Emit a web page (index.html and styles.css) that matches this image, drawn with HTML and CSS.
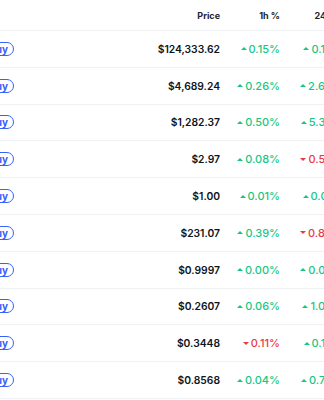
FILE: index.html
```html
<!DOCTYPE html>
<html>
<head>
<meta charset="utf-8">
<link rel="stylesheet" href="styles.css">
</head>
<body>
<div class="table">
  <div class="row head">
    <div class="c buy-c"></div>
    <div class="c num">Price</div>
    <div class="c num">1h %</div>
    <div class="c num">24h %</div>
    <div class="c num">7d %</div>
  </div>
  <div class="row"><div class="c buy-c"><span class="buy">Buy</span></div><div class="c num price">$124,333.62</div><div class="c num"><span class="pct up"><i></i>0.15%</span></div><div class="c num"><span class="pct up"><i></i>0.13%</span></div><div class="c num"><span class="pct up"><i></i>3.21%</span></div></div>
  <div class="row"><div class="c buy-c"><span class="buy">Buy</span></div><div class="c num price">$4,689.24</div><div class="c num"><span class="pct up"><i></i>0.26%</span></div><div class="c num"><span class="pct up"><i></i>2.64%</span></div><div class="c num"><span class="pct up"><i></i>8.12%</span></div></div>
  <div class="row"><div class="c buy-c"><span class="buy">Buy</span></div><div class="c num price">$1,282.37</div><div class="c num"><span class="pct up"><i></i>0.50%</span></div><div class="c num"><span class="pct up"><i></i>5.32%</span></div><div class="c num"><span class="pct up"><i></i>7.40%</span></div></div>
  <div class="row"><div class="c buy-c"><span class="buy">Buy</span></div><div class="c num price">$2.97</div><div class="c num"><span class="pct up"><i></i>0.08%</span></div><div class="c num"><span class="pct down"><i></i>0.52%</span></div><div class="c num"><span class="pct up"><i></i>1.05%</span></div></div>
  <div class="row"><div class="c buy-c"><span class="buy">Buy</span></div><div class="c num price">$1.00</div><div class="c num"><span class="pct up"><i></i>0.01%</span></div><div class="c num"><span class="pct up"><i></i>0.01%</span></div><div class="c num"><span class="pct up"><i></i>0.02%</span></div></div>
  <div class="row"><div class="c buy-c"><span class="buy">Buy</span></div><div class="c num price">$231.07</div><div class="c num"><span class="pct up"><i></i>0.39%</span></div><div class="c num"><span class="pct down"><i></i>0.84%</span></div><div class="c num"><span class="pct up"><i></i>4.77%</span></div></div>
  <div class="row"><div class="c buy-c"><span class="buy">Buy</span></div><div class="c num price">$0.9997</div><div class="c num"><span class="pct up"><i></i>0.00%</span></div><div class="c num"><span class="pct up"><i></i>0.02%</span></div><div class="c num"><span class="pct up"><i></i>0.01%</span></div></div>
  <div class="row"><div class="c buy-c"><span class="buy">Buy</span></div><div class="c num price">$0.2607</div><div class="c num"><span class="pct up"><i></i>0.06%</span></div><div class="c num"><span class="pct up"><i></i>1.03%</span></div><div class="c num"><span class="pct up"><i></i>6.58%</span></div></div>
  <div class="row"><div class="c buy-c"><span class="buy">Buy</span></div><div class="c num price">$0.3448</div><div class="c num"><span class="pct down"><i></i>0.11%</span></div><div class="c num"><span class="pct up"><i></i>0.15%</span></div><div class="c num"><span class="pct up"><i></i>2.31%</span></div></div>
  <div class="row"><div class="c buy-c"><span class="buy">Buy</span></div><div class="c num price">$0.8568</div><div class="c num"><span class="pct up"><i></i>0.04%</span></div><div class="c num"><span class="pct up"><i></i>0.72%</span></div><div class="c num"><span class="pct up"><i></i>3.90%</span></div></div>
</div>
</body>
</html>
```
FILE: styles.css
```css
html, body {
  margin: 0;
  padding: 0;
  background: #ffffff;
  overflow: hidden;
}
body {
  font-family: Inter, "Noto Sans", sans-serif;
  color: #222531;
}
.table {
  margin-left: -46px;
  width: 480px;
}
.row {
  display: grid;
  grid-template-columns: 60px 206px 60px 63px 80px;
  height: 36.8px;
  box-sizing: border-box;
  border-bottom: 1px solid #eff2f5;
  align-items: center;
}
.row.head {
  height: 31px;
  font-size: 9px;
  font-weight: 700;
  color: #222531;
}
.c {
  display: flex;
  align-items: center;
}
.num {
  justify-content: flex-end;
}
.buy-c {
  justify-content: flex-end;
}
.buy {
  display: inline-flex;
  align-items: center;
  height: 14px;
  padding: 0 5px;
  border: 1px solid #3861fb;
  border-radius: 8px;
  font-size: 10px;
  font-weight: 700;
  color: #3861fb;
  line-height: 1;
  box-sizing: border-box;
}
.price {
  font-size: 10.3px;
  font-weight: 600;
  color: #0d1421;
}
.pct {
  display: inline-flex;
  align-items: center;
  font-size: 11px;
  font-weight: 500;
}
.pct i {
  display: inline-block;
  width: 0;
  height: 0;
  border-left: 3px solid transparent;
  border-right: 3px solid transparent;
  margin-right: 2px;
}
.up { color: #16c784; }
.up i { border-bottom: 3px solid #16c784; }
.down { color: #ea3943; }
.down i { border-top: 3px solid #ea3943; }
```
